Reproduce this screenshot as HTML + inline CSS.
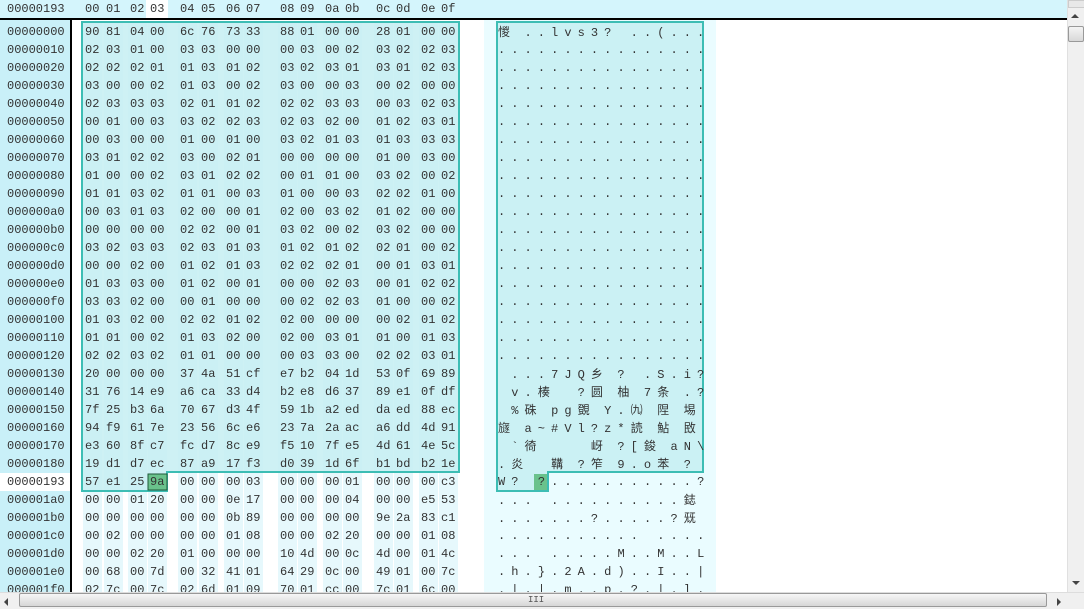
<!DOCTYPE html>
<html><head><meta charset="utf-8"><style>
body{margin:0;width:1084px;height:608px;overflow:hidden;background:#fff;position:relative;font-family:"Liberation Mono","Noto Sans CJK SC",monospace;font-size:12px;color:#333}
.abs{position:absolute}
.row{position:absolute;left:0;width:1067px;height:18px;line-height:18px}
.row .a{position:absolute;left:7px;top:0}
.row .h span{position:absolute;top:0}
.h span:nth-child(1){left:85px}.h span:nth-child(2){left:106px}.h span:nth-child(3){left:130px}.h span:nth-child(4){left:150px}
.h span:nth-child(5){left:180px}.h span:nth-child(6){left:201px}.h span:nth-child(7){left:226px}.h span:nth-child(8){left:246px}
.h span:nth-child(9){left:280px}.h span:nth-child(10){left:300px}.h span:nth-child(11){left:325px}.h span:nth-child(12){left:345px}
.h span:nth-child(13){left:376px}.h span:nth-child(14){left:396px}.h span:nth-child(15){left:421px}.h span:nth-child(16){left:441px}
.row .t{position:absolute;left:498px;top:0;letter-spacing:6.07px;white-space:pre}
.row .t i{font-style:normal;letter-spacing:14.5px;font-family:"Noto Sans CJK SC",sans-serif;font-size:12px}
.st{position:absolute;top:22px;height:570px;width:19px;background:#e6f8fc}
</style></head><body>
<div class="abs" style="left:0;top:0;width:1067px;height:18px;background:#d4f5fc"></div>
<div class="abs" style="left:146px;top:0;width:22px;height:18px;background:#fff"></div>
<div class="abs" style="left:0;top:18px;width:1067px;height:2px;background:#000"></div>
<div class="abs" style="left:0;top:20px;width:70px;height:572px;background:#c9f0f8"></div>
<div class="abs" style="left:0;top:473px;width:70px;height:18px;background:#fff"></div>
<div class="abs" style="left:70px;top:20px;width:2px;height:572px;background:#000"></div>
<div class="abs" style="left:484px;top:20px;width:232px;height:572px;background:#eafcff"></div>
<div class="st" style="left:83px"></div><div class="st" style="left:104px"></div><div class="st" style="left:128px"></div><div class="st" style="left:148px"></div>
<div class="st" style="left:178px"></div><div class="st" style="left:199px"></div><div class="st" style="left:224px"></div><div class="st" style="left:244px"></div>
<div class="st" style="left:278px"></div><div class="st" style="left:298px"></div><div class="st" style="left:323px"></div><div class="st" style="left:343px"></div>
<div class="st" style="left:374px"></div><div class="st" style="left:394px"></div><div class="st" style="left:419px"></div><div class="st" style="left:439px"></div>
<svg class="abs" style="left:0;top:0" width="1084" height="608">
<polygon points="82,22 459,22 459,472 167,472 167,491 82,491" fill="#c6eff2" fill-opacity="0.85" stroke="#3dbdb4" stroke-width="2"/>
<polygon points="497,22 703,22 703,472 548,472 548,491 497,491" fill="#c6eff2" fill-opacity="0.85" stroke="#3dbdb4" stroke-width="2"/>
<rect x="148" y="474" width="19" height="16" fill="#6ac28c" stroke="#1e5a3a" stroke-width="1"/>
<rect x="534" y="474" width="13" height="16" fill="#6ac28c"/>
</svg>
<div class="row" style="top:0"><span class="a">00000193</span><span class="h"><span>00</span><span>01</span><span>02</span><span>03</span><span>04</span><span>05</span><span>06</span><span>07</span><span>08</span><span>09</span><span>0a</span><span>0b</span><span>0c</span><span>0d</span><span>0e</span><span>0f</span></span></div>

<div class="row" style="top:23px"><span class="a">00000000</span><span class="h"><span>90</span><span>81</span><span>04</span><span>00</span><span>6c</span><span>76</span><span>73</span><span>33</span><span>88</span><span>01</span><span>00</span><span>00</span><span>28</span><span>01</span><span>00</span><span>00</span></span><span class="t"><i>惾</i>..lvs3? ..(...</span></div>
<div class="row" style="top:41px"><span class="a">00000010</span><span class="h"><span>02</span><span>03</span><span>01</span><span>00</span><span>03</span><span>03</span><span>00</span><span>00</span><span>00</span><span>03</span><span>00</span><span>02</span><span>03</span><span>02</span><span>02</span><span>03</span></span><span class="t">................</span></div>
<div class="row" style="top:59px"><span class="a">00000020</span><span class="h"><span>02</span><span>02</span><span>02</span><span>01</span><span>01</span><span>03</span><span>01</span><span>02</span><span>03</span><span>02</span><span>03</span><span>01</span><span>03</span><span>01</span><span>02</span><span>03</span></span><span class="t">................</span></div>
<div class="row" style="top:77px"><span class="a">00000030</span><span class="h"><span>03</span><span>00</span><span>00</span><span>02</span><span>01</span><span>03</span><span>00</span><span>02</span><span>03</span><span>00</span><span>00</span><span>03</span><span>00</span><span>02</span><span>00</span><span>00</span></span><span class="t">................</span></div>
<div class="row" style="top:95px"><span class="a">00000040</span><span class="h"><span>02</span><span>03</span><span>03</span><span>03</span><span>02</span><span>01</span><span>01</span><span>02</span><span>02</span><span>02</span><span>03</span><span>03</span><span>00</span><span>03</span><span>02</span><span>03</span></span><span class="t">................</span></div>
<div class="row" style="top:113px"><span class="a">00000050</span><span class="h"><span>00</span><span>01</span><span>00</span><span>03</span><span>03</span><span>02</span><span>02</span><span>03</span><span>02</span><span>03</span><span>02</span><span>00</span><span>01</span><span>02</span><span>03</span><span>01</span></span><span class="t">................</span></div>
<div class="row" style="top:131px"><span class="a">00000060</span><span class="h"><span>00</span><span>03</span><span>00</span><span>00</span><span>01</span><span>00</span><span>01</span><span>00</span><span>03</span><span>02</span><span>01</span><span>03</span><span>01</span><span>03</span><span>03</span><span>03</span></span><span class="t">................</span></div>
<div class="row" style="top:149px"><span class="a">00000070</span><span class="h"><span>03</span><span>01</span><span>02</span><span>02</span><span>03</span><span>00</span><span>02</span><span>01</span><span>00</span><span>00</span><span>00</span><span>00</span><span>01</span><span>00</span><span>03</span><span>00</span></span><span class="t">................</span></div>
<div class="row" style="top:167px"><span class="a">00000080</span><span class="h"><span>01</span><span>00</span><span>00</span><span>02</span><span>03</span><span>01</span><span>02</span><span>02</span><span>00</span><span>01</span><span>01</span><span>00</span><span>03</span><span>02</span><span>00</span><span>02</span></span><span class="t">................</span></div>
<div class="row" style="top:185px"><span class="a">00000090</span><span class="h"><span>01</span><span>01</span><span>03</span><span>02</span><span>01</span><span>01</span><span>00</span><span>03</span><span>01</span><span>00</span><span>00</span><span>03</span><span>02</span><span>02</span><span>01</span><span>00</span></span><span class="t">................</span></div>
<div class="row" style="top:203px"><span class="a">000000a0</span><span class="h"><span>00</span><span>03</span><span>01</span><span>03</span><span>02</span><span>00</span><span>00</span><span>01</span><span>02</span><span>00</span><span>03</span><span>02</span><span>01</span><span>02</span><span>00</span><span>00</span></span><span class="t">................</span></div>
<div class="row" style="top:221px"><span class="a">000000b0</span><span class="h"><span>00</span><span>00</span><span>00</span><span>00</span><span>02</span><span>02</span><span>00</span><span>01</span><span>03</span><span>02</span><span>00</span><span>02</span><span>03</span><span>02</span><span>00</span><span>00</span></span><span class="t">................</span></div>
<div class="row" style="top:239px"><span class="a">000000c0</span><span class="h"><span>03</span><span>02</span><span>03</span><span>03</span><span>02</span><span>03</span><span>01</span><span>03</span><span>01</span><span>02</span><span>01</span><span>02</span><span>02</span><span>01</span><span>00</span><span>02</span></span><span class="t">................</span></div>
<div class="row" style="top:257px"><span class="a">000000d0</span><span class="h"><span>00</span><span>00</span><span>02</span><span>00</span><span>01</span><span>02</span><span>01</span><span>03</span><span>02</span><span>02</span><span>02</span><span>01</span><span>00</span><span>01</span><span>03</span><span>01</span></span><span class="t">................</span></div>
<div class="row" style="top:275px"><span class="a">000000e0</span><span class="h"><span>01</span><span>03</span><span>03</span><span>00</span><span>01</span><span>02</span><span>00</span><span>01</span><span>00</span><span>00</span><span>02</span><span>03</span><span>00</span><span>01</span><span>02</span><span>02</span></span><span class="t">................</span></div>
<div class="row" style="top:293px"><span class="a">000000f0</span><span class="h"><span>03</span><span>03</span><span>02</span><span>00</span><span>00</span><span>01</span><span>00</span><span>00</span><span>00</span><span>02</span><span>02</span><span>03</span><span>01</span><span>00</span><span>00</span><span>02</span></span><span class="t">................</span></div>
<div class="row" style="top:311px"><span class="a">00000100</span><span class="h"><span>01</span><span>03</span><span>02</span><span>00</span><span>02</span><span>02</span><span>01</span><span>02</span><span>02</span><span>00</span><span>00</span><span>00</span><span>00</span><span>02</span><span>01</span><span>02</span></span><span class="t">................</span></div>
<div class="row" style="top:329px"><span class="a">00000110</span><span class="h"><span>01</span><span>01</span><span>00</span><span>02</span><span>01</span><span>03</span><span>02</span><span>00</span><span>02</span><span>00</span><span>03</span><span>01</span><span>01</span><span>00</span><span>01</span><span>03</span></span><span class="t">................</span></div>
<div class="row" style="top:347px"><span class="a">00000120</span><span class="h"><span>02</span><span>02</span><span>03</span><span>02</span><span>01</span><span>01</span><span>00</span><span>00</span><span>00</span><span>03</span><span>03</span><span>00</span><span>02</span><span>02</span><span>03</span><span>01</span></span><span class="t">................</span></div>
<div class="row" style="top:365px"><span class="a">00000130</span><span class="h"><span>20</span><span>00</span><span>00</span><span>00</span><span>37</span><span>4a</span><span>51</span><span>cf</span><span>e7</span><span>b2</span><span>04</span><span>1d</span><span>53</span><span>0f</span><span>69</span><span>89</span></span><span class="t"> ...7JQ<i>乡</i>? .S.i?</span></div>
<div class="row" style="top:383px"><span class="a">00000140</span><span class="h"><span>31</span><span>76</span><span>14</span><span>e9</span><span>a6</span><span>ca</span><span>33</span><span>d4</span><span>b2</span><span>e8</span><span>d6</span><span>37</span><span>89</span><span>e1</span><span>0f</span><span>df</span></span><span class="t"> v.<i>楱</i> ?<i>圆柚</i>7<i>条</i>.?</span></div>
<div class="row" style="top:401px"><span class="a">00000150</span><span class="h"><span>7f</span><span>25</span><span>b3</span><span>6a</span><span>70</span><span>67</span><span>d3</span><span>4f</span><span>59</span><span>1b</span><span>a2</span><span>ed</span><span>da</span><span>ed</span><span>88</span><span>ec</span></span><span class="t"> %<i>硃</i>pg<i>覴</i>Y.<i>㈨陧埸</i></span></div>
<div class="row" style="top:419px"><span class="a">00000160</span><span class="h"><span>94</span><span>f9</span><span>61</span><span>7e</span><span>23</span><span>56</span><span>6c</span><span>e6</span><span>23</span><span>7a</span><span>2a</span><span>ac</span><span>a6</span><span>dd</span><span>4d</span><span>91</span></span><span class="t"><i>旞</i>a~#Vl?z*<i>読鮎敃</i></span></div>
<div class="row" style="top:437px"><span class="a">00000170</span><span class="h"><span>e3</span><span>60</span><span>8f</span><span>c7</span><span>fc</span><span>d7</span><span>8c</span><span>e9</span><span>f5</span><span>10</span><span>7f</span><span>e5</span><span>4d</span><span>61</span><span>4e</span><span>5c</span></span><span class="t"> `<i>徛</i>   <i>岈</i>?[<i>鋑</i>aN\</span></div>
<div class="row" style="top:455px"><span class="a">00000180</span><span class="h"><span>19</span><span>d1</span><span>d7</span><span>ec</span><span>87</span><span>a9</span><span>17</span><span>f3</span><span>d0</span><span>39</span><span>1d</span><span>6f</span><span>b1</span><span>bd</span><span>b2</span><span>1e</span></span><span class="t">.<i>炎</i> <i>鞲</i>?<i>笮</i>9.o<i>苯</i>?</span></div>
<div class="row" style="top:473px"><span class="a">00000193</span><span class="h"><span>57</span><span>e1</span><span>25</span><span>9a</span><span>00</span><span>00</span><span>00</span><span>03</span><span>00</span><span>00</span><span>00</span><span>01</span><span>00</span><span>00</span><span>00</span><span>c3</span></span><span class="t">W? ?...........?</span></div>
<div class="row" style="top:491px"><span class="a">000001a0</span><span class="h"><span>00</span><span>00</span><span>01</span><span>20</span><span>00</span><span>00</span><span>0e</span><span>17</span><span>00</span><span>00</span><span>00</span><span>04</span><span>00</span><span>00</span><span>e5</span><span>53</span></span><span class="t">... ..........<i>鋕</i></span></div>
<div class="row" style="top:509px"><span class="a">000001b0</span><span class="h"><span>00</span><span>00</span><span>00</span><span>00</span><span>00</span><span>00</span><span>0b</span><span>89</span><span>00</span><span>00</span><span>00</span><span>00</span><span>9e</span><span>2a</span><span>83</span><span>c1</span></span><span class="t">.......?.....?<i>兓</i></span></div>
<div class="row" style="top:527px"><span class="a">000001c0</span><span class="h"><span>00</span><span>02</span><span>00</span><span>00</span><span>00</span><span>00</span><span>01</span><span>08</span><span>00</span><span>00</span><span>02</span><span>20</span><span>00</span><span>00</span><span>01</span><span>08</span></span><span class="t">........... ....</span></div>
<div class="row" style="top:545px"><span class="a">000001d0</span><span class="h"><span>00</span><span>00</span><span>02</span><span>20</span><span>01</span><span>00</span><span>00</span><span>00</span><span>10</span><span>4d</span><span>00</span><span>0c</span><span>4d</span><span>00</span><span>01</span><span>4c</span></span><span class="t">... .....M..M..L</span></div>
<div class="row" style="top:563px"><span class="a">000001e0</span><span class="h"><span>00</span><span>68</span><span>00</span><span>7d</span><span>00</span><span>32</span><span>41</span><span>01</span><span>64</span><span>29</span><span>0c</span><span>00</span><span>49</span><span>01</span><span>00</span><span>7c</span></span><span class="t">.h.}.2A.d)..I..|</span></div>
<div class="row" style="top:581px"><span class="a">000001f0</span><span class="h"><span>02</span><span>7c</span><span>00</span><span>7c</span><span>02</span><span>6d</span><span>01</span><span>09</span><span>70</span><span>01</span><span>cc</span><span>00</span><span>7c</span><span>01</span><span>6c</span><span>00</span></span><span class="t">.|.|.m..p.?.|.l.</span></div>

<div class="abs" style="left:1067px;top:0;width:17px;height:592px;background:#f0f0f0;border-left:1px solid #e0e0e0"></div>
<div class="abs" style="left:1068px;top:0;width:15px;height:6px;background:#e8e8e8;border:1px solid #ccc"></div>
<div class="abs" style="left:1071px;top:14px;width:0;height:0;border-left:4px solid transparent;border-right:4px solid transparent;border-bottom:4px solid #444"></div>
<div class="abs" style="left:1068px;top:26px;width:14px;height:14px;background:linear-gradient(#f4f4f4,#d8d8d8);border:1px solid #999;border-radius:2px"></div>
<div class="abs" style="left:1072px;top:581px;width:0;height:0;border-left:4px solid transparent;border-right:4px solid transparent;border-top:4px solid #444"></div>
<div class="abs" style="left:0;top:592px;width:1084px;height:16px;background:#f0f0f0;border-top:1px solid #ddd"></div>
<div class="abs" style="left:4px;top:598px;width:0;height:0;border-top:4px solid transparent;border-bottom:4px solid transparent;border-right:4px solid #444"></div>
<div class="abs" style="left:19px;top:593px;width:1026px;height:12px;background:linear-gradient(#f6f6f6,#d6d6d6);border:1px solid #999;border-radius:2px"></div>
<div class="abs" style="left:528px;top:596px;font-size:9px;line-height:8px;color:#555">III</div>
<div class="abs" style="left:1057px;top:598px;width:0;height:0;border-top:4px solid transparent;border-bottom:4px solid transparent;border-left:4px solid #444"></div>
</body></html>
